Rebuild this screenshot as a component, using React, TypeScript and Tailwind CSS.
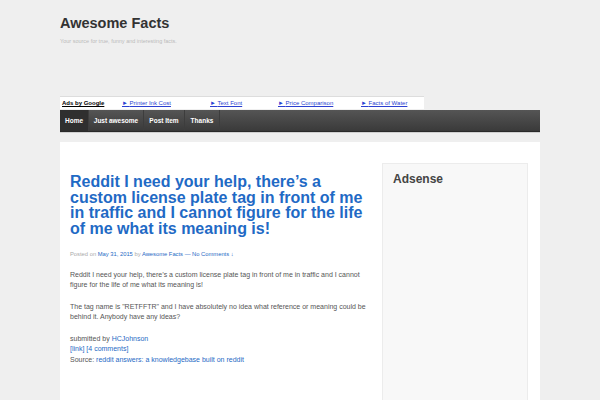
export default function App() {
  const ads = [
    { label: 'Printer Ink Cost', w: 'w-[88px]' },
    { label: 'Text Font', w: 'w-[68px]' },
    { label: 'Price Comparison', w: 'w-[83px]' },
    { label: 'Facts of Water', w: 'w-[60px]' },
  ]
  const nav = [
    { label: 'Home', w: 'w-[29px]', active: true },
    { label: 'Just awesome', w: 'w-[55px]' },
    { label: 'Post Item', w: 'w-[41px]' },
    { label: 'Thanks', w: 'w-[35px]' },
  ]

  return (
    <div className="min-h-screen bg-[#efefef] font-['Liberation_Sans',Arial,sans-serif]">
      <div className="w-[480px] mx-auto">
        {/* header */}
        <div className="pt-[16px]">
          <h1 className="text-[14.5px] leading-none font-bold text-[#333]">Awesome Facts</h1>
          <p className="mt-[8px] text-[5.5px] leading-none text-[#bbb]">Your source for true, funny and interesting facts.</p>
        </div>

        {/* ad links */}
        <div className="mt-[52px] w-[364px] h-[13px] bg-white border-t border-[#ddd] flex items-center text-[6px] leading-none">
          <a className="w-[62px] pl-[2px] font-bold text-black underline">Ads by Google</a>
          {ads.map((a) => (
            <a key={a.label} className={`${a.w} text-[#2b3fd0] underline`}>
              ► {a.label}
            </a>
          ))}
        </div>

        {/* nav */}
        <div className="mt-[1px] h-[22px] flex bg-gradient-to-b from-[#555] to-[#3a3a3a] border-b border-[#2a2a2a] shadow-[0_1px_0_#d0d0d0]">
          {nav.map((n) => (
            <div
              key={n.label}
              className={`${n.w} flex items-center justify-center text-[6.5px] font-bold text-white border-r border-[#3d3d3d] ${n.active ? 'bg-[#2f2f2f]' : ''}`}
            >
              {n.label}
            </div>
          ))}
        </div>

        {/* content */}
        <div className="mt-[10px] bg-white flex min-h-[260px]">
          <div className="w-[322px] pl-[10px] pr-[10px] pt-[32px]">
            <h2 className="text-[16px] leading-[15.5px] font-bold text-[#1f6ac5]">
              Reddit I need your help, there’s a custom license plate tag in front of me in traffic and I cannot figure for the life of me what its meaning is!
            </h2>
            <p className="mt-[16px] text-[5.8px] leading-none text-[#aaa]">
              Posted on <a className="text-[#1f6ac5]">May 31, 2015</a> by <a className="text-[#1f6ac5]">Awesome Facts</a>{' '}
              <a className="text-[#1f6ac5]">— No Comments ↓</a>
            </p>
            <div className="mt-[12px] text-[7px] leading-[10.5px] text-[#555]">
              <p>
                Reddit I need your help, there’s a custom license plate tag in front of me in traffic and I cannot figure for the life of me what its meaning is!
              </p>
              <p className="mt-[11px]">
                The tag name is "RETFFTR" and I have absolutely no idea what reference or meaning could be behind it. Anybody have any ideas?
              </p>
              <p className="mt-[11px]">
                submitted by <a className="text-[#1f6ac5]">HCJohnson</a>
                <br />
                <a className="text-[#1f6ac5]">[link]</a> <a className="text-[#1f6ac5]">[4 comments]</a>
                <br />
                Source: <a className="text-[#1f6ac5]">reddit answers: a knowledgebase built on reddit</a>
              </p>
            </div>
          </div>
          <div className="w-[146px] mt-[21px] bg-[#f8f8f8] border border-[#ececec] px-[10px] pt-[9px]">
            <h3 className="text-[12px] leading-none font-bold text-[#444]">Adsense</h3>
          </div>
        </div>
      </div>
    </div>
  )
}
